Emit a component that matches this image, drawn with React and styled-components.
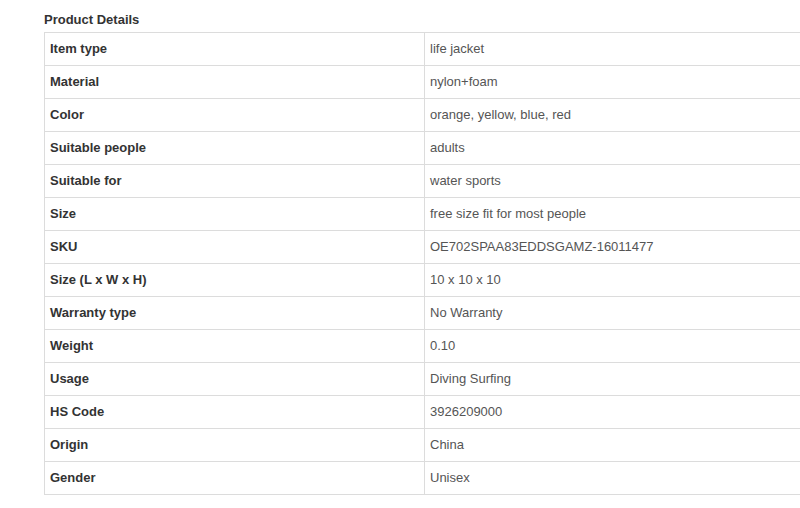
import React from "react";
import styled, { createGlobalStyle } from "styled-components";

const Global = createGlobalStyle`
  html, body { margin: 0; padding: 0; background: #fff; overflow: hidden; }
  body { font-family: "Liberation Sans", Arial, sans-serif; }
`;

const Page = styled.div`
  width: 800px;
  height: 508px;
  overflow: hidden;
  padding: 12px 0 0 44px;
  box-sizing: border-box;
`;

const Title = styled.h3`
  margin: 0 0 4px 0;
  font-size: 13px;
  line-height: 16px;
  font-weight: bold;
  color: #333;
`;

const Table = styled.table`
  width: 820px;
  border-collapse: collapse;
  font-size: 13px;
`;

const Row = styled.tr`
  height: 33px;
`;

const Cell = styled.td`
  border: 1px solid #dcdcdc;
  padding: 0 5px 2px 5px;
  height: 30px;
  vertical-align: middle;
  color: ${(p) => (p.$label ? "#333" : "#555")};
  font-weight: ${(p) => (p.$label ? "bold" : "normal")};
  width: ${(p) => (p.$label ? "369px" : "auto")};
`;

const rows = [
  ["Item type", "life jacket"],
  ["Material", "nylon+foam"],
  ["Color", "orange, yellow, blue, red"],
  ["Suitable people", "adults"],
  ["Suitable for", "water sports"],
  ["Size", "free size fit for most people"],
  ["SKU", "OE702SPAA83EDDSGAMZ-16011477"],
  ["Size (L x W x H)", "10 x 10 x 10"],
  ["Warranty type", "No Warranty"],
  ["Weight", "0.10"],
  ["Usage", "Diving Surfing"],
  ["HS Code", "3926209000"],
  ["Origin", "China"],
  ["Gender", "Unisex"],
];

export default function App() {
  return (
    <>
      <Global />
      <Page>
        <Title>Product Details</Title>
        <Table>
          <tbody>
            {rows.map(([k, v]) => (
              <Row key={k}>
                <Cell $label>{k}</Cell>
                <Cell>{v}</Cell>
              </Row>
            ))}
          </tbody>
        </Table>
      </Page>
    </>
  );
}
